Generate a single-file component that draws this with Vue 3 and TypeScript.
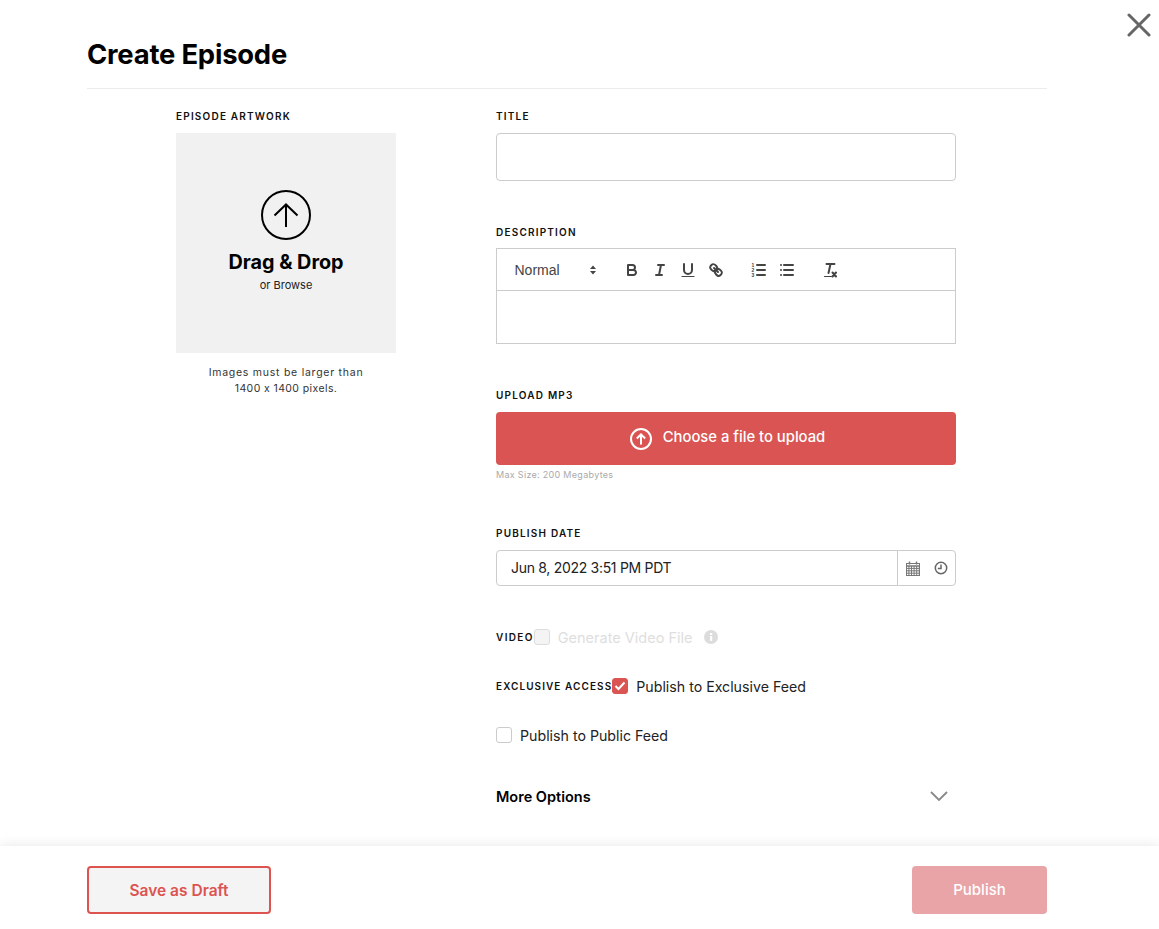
<script setup lang="ts">
const calendarRows: number[] = [0, 1, 2, 3]
const calendarCols: number[] = [0, 1, 2, 3, 4]
</script>

<template>
  <div class="page">
    <button class="close" type="button" aria-label="Close">
      <svg width="24" height="24" viewBox="0 0 24 24">
        <path d="M2 2 22 22M22 2 2 22" stroke="#666" stroke-width="3" stroke-linecap="round" />
      </svg>
    </button>

    <header class="head">
      <h1>Create Episode</h1>
    </header>

    <main class="body">
      <section class="art">
        <div class="label">EPISODE ARTWORK</div>
        <div class="drop">
          <svg class="drop-icon" width="50" height="50" viewBox="0 0 50 50" fill="none" stroke="#000">
            <circle cx="25" cy="25" r="24" stroke-width="2" />
            <path d="M25 37V15M13.5 25.5 25 14.5 36.5 25.5" stroke-width="2" />
          </svg>
          <div class="drop-title">Drag &amp; Drop</div>
          <div class="drop-sub">or Browse</div>
        </div>
        <p class="note">Images must be larger than<br /><span class="note-size">1400 x 1400 pixels.</span></p>
      </section>

      <section class="form">
        <div class="label">TITLE</div>
        <input class="text-input" type="text" />

        <div class="label desc-label">DESCRIPTION</div>
        <div class="editor">
          <div class="toolbar">
            <div class="picker">
              <span>Normal</span>
              <svg width="18" height="18" viewBox="0 0 18 18" fill="#444">
                <path d="M9 4.5 12 8H6zM9 13.5 12 10H6z" />
              </svg>
            </div>
            <div class="tool-group">
              <span class="tool">
                <svg viewBox="0 0 18 18"><path d="M5 4h4.5A2.5 2.5 0 0 1 12 6.5 2.5 2.5 0 0 1 9.5 9H5zM5 9h5.500A2.500 2.500 0 0 1 13 11.500 2.500 2.500 0 0 1 10.500 14H5z" /></svg>
              </span>
              <span class="tool">
                <svg viewBox="0 0 18 18"><path d="M7 4h6M5 14h6M8 14l2-10" /></svg>
              </span>
              <span class="tool">
                <svg viewBox="0 0 18 18"><path d="M5 3v6a4 4 0 0 0 4 4 4 4 0 0 0 4-4V3" /><path d="M3 15.500h12" stroke-width="1.200" /></svg>
              </span>
              <span class="tool">
                <svg viewBox="0 0 18 18"><path d="M7 7l4 4" /><path d="M8.900 4.577a3.476 3.476 0 0 1 .36 4.679A3.476 3.476 0 0 1 4.577 8.900C3.185 7.500 2.035 6.400 4.217 4.217S7.500 3.185 8.900 4.577Z" /><path d="M13.423 9.100a3.476 3.476 0 0 0-4.679-.36 3.476 3.476 0 0 0 .36 4.679c1.392 1.392 2.500 2.542 4.679.36S14.815 10.500 13.423 9.100Z" /></svg>
              </span>
            </div>
            <div class="tool-group">
              <span class="tool">
                <svg viewBox="0 0 18 18">
                  <path d="M7 4h8M7 9h8M7 14h8" />
                  <text class="num" x="2.800" y="5.800">1</text>
                  <text class="num" x="2.800" y="10.800">2</text>
                  <text class="num" x="2.800" y="15.800">3</text>
                </svg>
              </span>
              <span class="tool">
                <svg viewBox="0 0 18 18"><path d="M6 4h9M6 9h9M6 14h9M3 4h.01M3 9h.01M3 14h.01" /></svg>
              </span>
            </div>
            <div class="tool-group">
              <span class="tool">
                <svg viewBox="0 0 18 18">
                  <path d="M5.500 3h8M9.500 3 7.500 12" />
                  <path d="M3.500 15.500h7" stroke-width="1.200" />
                  <path d="M11.500 11.500l3.500 4M15 11.500l-3.500 4" stroke-width="2" />
                </svg>
              </span>
            </div>
          </div>
          <div class="editor-area"></div>
        </div>

        <div class="label upload-label">UPLOAD MP3</div>
        <button class="upload" type="button">
          <svg width="22" height="22" viewBox="0 0 22 22" fill="none" stroke="#fff" stroke-width="2">
            <circle cx="11" cy="11" r="10" />
            <path d="M11 16.500V7M6.800 10.500 11 6.500l4.200 4" />
          </svg>
          <span class="upload-text">Choose a file to upload</span>
        </button>
        <div class="hint">Max Size: 200 Megabytes</div>

        <div class="label date-label">PUBLISH DATE</div>
        <div class="date">
          <span class="date-value">Jun 8, 2022 3:51 PM PDT</span>
          <div class="date-icons">
            <svg width="14" height="15" viewBox="0 0 14 15" fill="none" stroke="#777" stroke-width="1">
              <rect x="0.500" y="2.500" width="13" height="12" />
              <path d="M.5 5h13" stroke-width="1.500" />
              <path v-for="c in calendarCols" :key="'c' + c" :d="`M${2.9 + c * 2.6} 5v9.500`" />
              <path v-for="r in calendarRows" :key="'r' + r" :d="`M.5 ${7.400 + r * 2.400}h13`" />
              <path d="M3.500 .5v3M10.500 .5v3" stroke-width="1.500" />
            </svg>
            <svg width="14" height="14" viewBox="0 0 14 14" fill="none" stroke="#666" stroke-width="1.500">
              <circle cx="7" cy="7" r="5.700" />
              <path d="M7 3.500V7.500H3.800" />
            </svg>
          </div>
        </div>

        <div class="check-row video-row">
          <span class="label inline video-label">VIDEO</span>
          <span class="box box-disabled"></span>
          <span class="check-text disabled">Generate Video File</span>
          <svg class="info" width="14" height="14" viewBox="0 0 14 14">
            <circle cx="7" cy="7" r="7" fill="#dcdcdc" />
            <rect x="6" y="6" width="2.200" height="5" fill="#fff" />
            <rect x="6" y="3" width="2.200" height="2" fill="#fff" />
          </svg>
        </div>

        <div class="check-row exclusive-row">
          <span class="label inline">EXCLUSIVE ACCESS</span>
          <span class="box box-on">
            <svg width="12" height="10" viewBox="0 0 12 10" fill="none" stroke="#fff" stroke-width="2">
              <path d="M1.500 5 4.500 8 10.500 1.500" />
            </svg>
          </span>
          <span class="check-text">Publish to Exclusive Feed</span>
        </div>

        <div class="check-row public-row">
          <span class="box"></span>
          <span class="check-text">Publish to Public Feed</span>
        </div>

        <div class="more">
          <span>More Options</span>
          <svg width="18" height="10" viewBox="0 0 18 10" fill="none" stroke="#888" stroke-width="1.800">
            <path d="M1 1 9 9 17 1" />
          </svg>
        </div>
      </section>
    </main>

    <footer class="foot">
      <button class="draft" type="button">Save as Draft</button>
      <button class="publish" type="button">Publish</button>
    </footer>
  </div>
</template>

<style>
html,
body {
  margin: 0;
  background: #fff;
}
</style>

<style scoped>
.page {
  position: relative;
  display: flex;
  flex-direction: column;
  height: 929px;
  overflow: hidden;
  background: #fff;
  color: #000;
  font-family: Inter, "Noto Sans", sans-serif;
}
.close {
  position: absolute;
  top: 13px;
  right: 8px;
  padding: 0;
  border: 0;
  background: none;
  line-height: 0;
}
.head {
  margin: 0 112px 0 87px;
  height: 88px;
  border-bottom: 1px solid #ececec;
}
h1 {
  margin: 0;
  padding-top: 36px;
  font-size: 27.400px;
  line-height: 36px;
  font-weight: 700;
  letter-spacing: -0.2px;
}
.body {
  flex: 1;
  display: flex;
  padding: 19px 0 0 176px;
  min-height: 0;
}
.art {
  width: 220px;
  margin-right: 100px;
}
.form {
  width: 460px;
}
.label {
  height: 17px;
  margin-bottom: 8px;
  font-size: 10px;
  line-height: 17px;
  font-weight: 600;
  letter-spacing: 1.200px;
  color: #111;
}
.label.inline {
  flex: none;
  margin-bottom: 0;
  letter-spacing: 1.080px;
}
.label.video-label {
  letter-spacing: 1.350px;
}
.drop {
  display: flex;
  flex-direction: column;
  align-items: center;
  width: 220px;
  height: 220px;
  background: #f1f1f1;
}
.drop-icon {
  margin-top: 57px;
}
.drop-title {
  margin-top: 9px;
  font-size: 19.800px;
  line-height: 26px;
  font-weight: 700;
}
.drop-sub {
  margin-top: 3px;
  font-size: 11px;
  line-height: 14px;
  color: #222;
}
.note {
  margin: 12px 0 0;
  text-align: center;
  font-size: 10.500px;
  line-height: 16px;
  letter-spacing: 0.750px;
  color: #333;
}
.note-size {
  letter-spacing: 0.400px;
}
.text-input {
  display: block;
  box-sizing: border-box;
  width: 460px;
  height: 48px;
  border: 1px solid #ccc;
  border-radius: 4px;
  background: #fff;
}
.desc-label {
  margin-top: 43px;
}
.editor {
  box-sizing: border-box;
  height: 96px;
  margin-top: -1px;
  border: 1px solid #ccc;
}
.toolbar {
  display: flex;
  align-items: center;
  height: 41px;
  padding-left: 7px;
  border-bottom: 1px solid #ccc;
}
.picker {
  display: flex;
  align-items: center;
  justify-content: space-between;
  box-sizing: border-box;
  width: 98px;
  margin-right: 1px;
  padding: 0 0 0 10.500px;
  font-family: "Liberation Sans", Arial, sans-serif;
  font-size: 14px;
  color: #444;
}
.tool-group {
  display: flex;
  margin-left: 15px;
}
.tool {
  display: flex;
  align-items: center;
  justify-content: center;
  width: 28px;
  height: 24px;
}
.tool svg {
  width: 18px;
  height: 18px;
  fill: none;
  stroke: #444;
  stroke-width: 2;
  stroke-linecap: round;
  stroke-linejoin: round;
}
.num {
  font-family: "Liberation Sans", Arial, sans-serif;
  font-size: 5px;
  font-weight: 700;
  fill: #444;
  stroke: none;
  text-anchor: middle;
}
.upload-label {
  margin-top: 43px;
}
.upload {
  display: flex;
  align-items: center;
  justify-content: center;
  gap: 11px;
  width: 460px;
  height: 53px;
  padding: 0 0 0 3px;
  border: 0;
  border-radius: 4px;
  background: #d95452;
  color: #fff;
  font-family: inherit;
  font-size: 14.800px;
  font-weight: 500;
}
.upload-text {
  margin-bottom: 3px;
}
.hint {
  margin-top: 3px;
  font-size: 9px;
  line-height: 14px;
  letter-spacing: 0.300px;
  color: #aaa;
}
.date-label {
  margin-top: 43px;
}
.date {
  display: flex;
  align-items: center;
  box-sizing: border-box;
  width: 460px;
  height: 36px;
  border: 1px solid #ccc;
  border-radius: 4px;
}
.date-value {
  flex: 1;
  padding: 0 0 2px 14px;
  font-size: 14px;
  letter-spacing: -0.300px;
  color: #222;
}
.date-icons {
  display: flex;
  align-items: center;
  justify-content: space-between;
  box-sizing: border-box;
  width: 58px;
  height: 100%;
  padding: 0 7px 0 8px;
  border-left: 1px solid #ccc;
}
.check-row {
  display: flex;
  align-items: center;
  height: 20px;
}
.video-row {
  margin-top: 41px;
}
.exclusive-row {
  margin-top: 29px;
}
.public-row {
  margin-top: 29px;
}
.box {
  flex: none;
  display: flex;
  align-items: center;
  justify-content: center;
  box-sizing: border-box;
  width: 16px;
  height: 16px;
  border: 1px solid #ccc;
  border-radius: 3px;
  background: #fff;
}
.box-disabled {
  background: #f4f4f4;
  border-color: #ddd;
}
.box-on {
  background: #d95452;
  border-color: #d95452;
}
.check-text {
  margin-left: 8px;
  font-size: 14.200px;
  color: #222;
}
.check-text.disabled {
  font-size: 14.500px;
  color: #dedede;
}
.info {
  margin-left: 12px;
}
.more {
  display: flex;
  align-items: center;
  justify-content: space-between;
  height: 20px;
  margin-top: 41px;
  padding-right: 8px;
  font-size: 14.500px;
  font-weight: 600;
}
.foot {
  position: relative;
  z-index: 1;
  flex: none;
  display: flex;
  align-items: flex-start;
  justify-content: space-between;
  box-sizing: border-box;
  height: 83px;
  padding: 20px 112px 0 87px;
  background: #fff;
  box-shadow: 0 0 12px rgba(0, 0, 0, 0.1);
}
.draft,
.publish {
  height: 48px;
  border-radius: 4px;
  font-family: inherit;
  font-size: 15px;
  font-weight: 500;
}
.draft {
  width: 184px;
  border: 2px solid #dc5350;
  background: #f4f4f4;
  color: #dc5350;
  font-size: 15.500px;
  font-weight: 600;
}
.publish {
  width: 135px;
  padding: 0 0 2px;
  border: 0;
  background: #e9a4a7;
  color: #fff;
}
</style>
